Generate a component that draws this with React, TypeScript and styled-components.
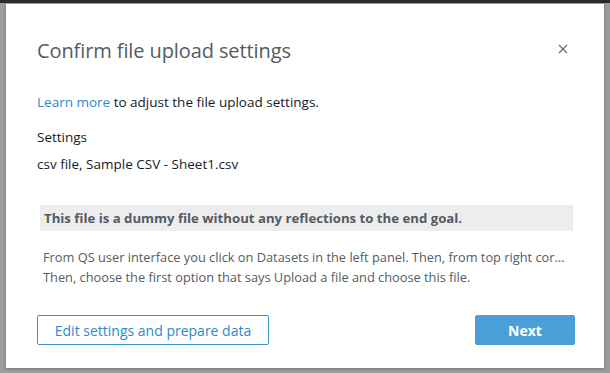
import React from "react";
import styled, { createGlobalStyle } from "styled-components";

const Global = createGlobalStyle`
  html, body { margin: 0; padding: 0; }
  body {
    width: 610px;
    height: 373px;
    overflow: hidden;
    background: #9c9c9c;
    font-family: "Open Sans", "Liberation Sans", sans-serif;
  }
`;

const Page = styled.div`
  width: 610px;
  height: 373px;
  display: flex;
  flex-direction: column;
  box-sizing: border-box;
`;

const TopBar = styled.div`
  height: 3px;
  background: #2b2b2b;
  flex: none;
`;

const Backdrop = styled.div`
  flex: 1;
  display: flex;
  align-items: flex-start;
  justify-content: center;
  padding-top: 1px;
`;

const Modal = styled.div`
  width: 598px;
  height: 364px;
  background: #ffffff;
  box-sizing: border-box;
  padding: 31px 31px 0 31px;
  display: flex;
  flex-direction: column;
  box-shadow: 0 1px 3px rgba(0, 0, 0, 0.25);
`;

const Header = styled.div`
  display: flex;
  align-items: center;
  justify-content: space-between;
  height: 30px;
`;

const Title = styled.h2`
  margin: 0;
  font-size: 20px;
  font-weight: 400;
  color: #545b64;
  letter-spacing: -0.1px;
`;

const Close = styled.button`
  border: none;
  background: none;
  padding: 0;
  width: 12px;
  height: 12px;
  margin-right: 4px;
  margin-top: -3px;
  display: flex;
  align-items: center;
  justify-content: center;
  color: #6b6f75;
  cursor: pointer;
`;

const Body = styled.div`
  margin-top: 28px;
  display: flex;
  flex-direction: column;
`;

const Para = styled.p<{ $mt?: number }>`
  margin: ${(p) => p.$mt ?? 0}px 0 0 0;
  font-size: 13.5px;
  line-height: 18px;
  color: #16191f;
`;

const Link = styled.a`
  color: #2a8bca;
  text-decoration: none;
`;

const InfoBlock = styled.div`
  margin: 32px 0 0 3px;
  display: flex;
  flex-direction: column;
`;

const Banner = styled.div`
  background: #ededed;
  height: 26px;
  display: flex;
  align-items: center;
  padding: 0 4px;
  font-size: 13.2px;
  font-weight: 700;
  color: #545b64;
`;

const Line = styled.div<{ $mt: number }>`
  margin-top: ${(p) => p.$mt}px;
  padding: 0 3px;
  font-size: 12.8px;
  line-height: 17px;
  color: #545b64;
  white-space: nowrap;
  overflow: hidden;
  text-overflow: ellipsis;
`;

const Footer = styled.div`
  margin-top: 29px;
  display: flex;
  justify-content: space-between;
  align-items: center;
`;

const Button = styled.button<{ $primary?: boolean }>`
  height: 30px;
  box-sizing: border-box;
  border-radius: 2px;
  font-family: inherit;
  font-size: 14px;
  cursor: pointer;
  border: 1px solid #2a8bca;
  background: ${(p) => (p.$primary ? "#4a9fd6" : "#ffffff")};
  border-color: ${(p) => (p.$primary ? "#4a9fd6" : "#3d93cc")};
  color: ${(p) => (p.$primary ? "#ffffff" : "#2a8bca")};
  font-weight: ${(p) => (p.$primary ? 700 : 400)};
  width: ${(p) => (p.$primary ? "100px" : "232px")};
  margin-right: ${(p) => (p.$primary ? "-2px" : "0")};
`;

export default function App() {
  return (
    <Page>
      <Global />
      <TopBar />
      <Backdrop>
        <Modal>
          <Header>
            <Title>Confirm file upload settings</Title>
            <Close aria-label="Close">
              <svg width="10" height="10" viewBox="0 0 10 10">
                <path d="M1 1L9 9M9 1L1 9" stroke="currentColor" strokeWidth="1.3" />
              </svg>
            </Close>
          </Header>
          <Body>
            <Para>
              <Link href="#">Learn more</Link> to adjust the file upload settings.
            </Para>
            <Para $mt={17}>Settings</Para>
            <Para $mt={9}>csv file, Sample CSV - Sheet1.csv</Para>
          </Body>
          <InfoBlock>
            <Banner>This file is a dummy file without any reflections to the end goal.</Banner>
            <Line $mt={18}>
              From QS user interface you click on Datasets in the left panel. Then, from top right corner, click on New dataset.
            </Line>
            <Line $mt={3}>Then, choose the first option that says Upload a file and choose this file.</Line>
          </InfoBlock>
          <Footer>
            <Button>Edit settings and prepare data</Button>
            <Button $primary>Next</Button>
          </Footer>
        </Modal>
      </Backdrop>
    </Page>
  );
}
